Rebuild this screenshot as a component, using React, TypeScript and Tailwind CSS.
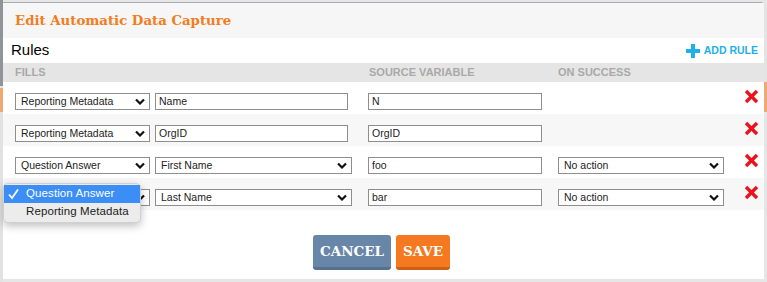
import React from 'react';

const sans = { fontFamily: '"Liberation Sans", Arial, sans-serif' };
const slab = { fontFamily: '"DejaVu Serif", serif' };

function Chevron() {
  return (
    <svg width="10" height="7" viewBox="0 0 10 7" className="shrink-0">
      <polyline points="1,1.5 5,5.5 9,1.5" fill="none" stroke="#111" strokeWidth="2.2" />
    </svg>
  );
}

function SelectBox({ value, width, hideText }: { value: string; width: string; hideText?: boolean }) {
  return (
    <div className={`${width} h-[17px] border border-[#8e8e8e] bg-white flex items-center justify-between pl-[5px] pr-[4px] text-[10.5px] text-[#222]`}>
      <span className={hideText ? 'invisible' : ''}>{value}</span>
      <Chevron />
    </div>
  );
}

function TextBox({ value, width }: { value: string; width: string }) {
  return (
    <div className={`${width} h-[17px] border border-[#8e8e8e] bg-white flex items-center pl-[3px] text-[10.5px] text-[#222]`}>
      {value}
    </div>
  );
}

function RemoveIcon() {
  return (
    <svg width="15" height="15" viewBox="0 0 15 15" className="-mt-[4px]">
      <line x1="2" y1="2" x2="13" y2="13" stroke="#e8131b" strokeWidth="3.4" />
      <line x1="13" y1="2" x2="2" y2="13" stroke="#e8131b" strokeWidth="3.4" />
    </svg>
  );
}

type Rule = {
  fill: string;
  target: string;
  targetIsSelect: boolean;
  source: string;
  success?: string;
};

const rules: Rule[] = [
  { fill: 'Reporting Metadata', target: 'Name', targetIsSelect: false, source: 'N' },
  { fill: 'Reporting Metadata', target: 'OrgID', targetIsSelect: false, source: 'OrgID' },
  { fill: 'Question Answer', target: 'First Name', targetIsSelect: true, source: 'foo', success: 'No action' },
  { fill: 'Question Answer', target: 'Last Name', targetIsSelect: true, source: 'bar', success: 'No action' },
];

// open native menu for the last rule's "fills" select
function FillMenu() {
  return (
    <div className="absolute left-0 top-[5px] w-[138px] h-[40px] rounded-[5px] bg-[#ececec] border border-[#d0d0d0] shadow-[0_3px_8px_rgba(0,0,0,0.25)] pt-[1px] text-[11.5px] text-[#222] z-10">
      <div className="h-[18px] bg-[#3b8ef5] text-white flex items-center">
        <svg width="22" height="12" viewBox="0 0 22 12" className="shrink-0">
          <polyline points="5,6.5 8,10 14,1.5" fill="none" stroke="#fff" strokeWidth="1.8" />
        </svg>
        <span className="tracking-[0.1px]">Question Answer</span>
      </div>
      <div className="h-[17px] flex items-center pl-[22px] tracking-[0.1px]">Reporting Metadata</div>
    </div>
  );
}

export default function App() {
  return (
    <div className="w-[767px] h-[282px] bg-[#e6e6e6] flex overflow-hidden" style={sans}>
      <div className="w-[3px] flex flex-col shrink-0">
        <div className="h-[86px] bg-[#8f939a]" />
        <div className="h-[2px] bg-[#e6e6e6]" />
        <div className="h-[24px] bg-[#eea873]" />
        <div className="flex-1 bg-[#e2e2e2]" />
      </div>

      <div className="w-[761px] mt-[2px] h-[277px] bg-white border-t border-[#a9abb0] rounded-tr-[3px] flex flex-col">
        <div className="h-[35px] bg-[#f6f6f6] flex items-center pl-[12px]">
          <h2 className="text-[13.3px] font-bold text-[#f47b20]" style={slab}>
            Edit Automatic Data Capture
          </h2>
        </div>

        <div className="h-[25px] flex items-center justify-between pl-[8px] pr-[6px]">
          <span className="text-[15px] text-black">Rules</span>
          <button className="flex items-center gap-[4px] text-[10.5px] font-bold text-[#1eb0e6]">
            <svg width="14" height="14" viewBox="0 0 14 14">
              <rect x="5" y="0" width="4" height="14" fill="#1eb0e6" />
              <rect x="0" y="5" width="14" height="4" fill="#1eb0e6" />
            </svg>
            ADD RULE
          </button>
        </div>

        <div className="h-[19px] bg-[#e5e5e5] flex items-center pl-[12px] text-[11px] font-bold text-[#a9a9a9]">
          <span className="w-[354px]">FILLS</span>
          <span className="w-[189px]">SOURCE VARIABLE</span>
          <span>ON SUCCESS</span>
        </div>

        {rules.map((r, i) => (
          <div
            key={i}
            className={`relative h-[32px] flex items-start pt-[11px] pl-[12px] ${i % 2 === 1 ? 'bg-[#f7f7f7]' : 'bg-white'}`}
          >
            <SelectBox value={r.fill} width="w-[135px]" hideText={i === 3} />
            <div className="w-[5px]" />
            {r.targetIsSelect ? (
              <SelectBox value={r.target} width="w-[197px]" />
            ) : (
              <TextBox value={r.target} width="w-[193px]" />
            )}
            <div className={r.targetIsSelect ? 'w-[16px]' : 'w-[20px]'} />
            <TextBox value={r.source} width="w-[174px]" />
            <div className="w-[16px]" />
            {r.success ? <SelectBox value={r.success} width="w-[166px]" /> : <div className="w-[166px]" />}
            <div className="w-[20px]" />
            <RemoveIcon />
            {i === 3 && <FillMenu />}
          </div>
        ))}

        <div className="flex-1 flex justify-center gap-[5px] pt-[25px] pr-[4px]">
          <button
            className="w-[78px] h-[35px] rounded-[3px] bg-[#6886a8] border-b-[3px] border-[#56718f] text-white text-[13.5px] font-bold"
            style={slab}
          >
            CANCEL
          </button>
          <button
            className="w-[54px] h-[35px] rounded-[3px] bg-[#f47920] border-b-[3px] border-[#cf5f12] text-white text-[13.5px] font-bold"
            style={slab}
          >
            SAVE
          </button>
        </div>
      </div>

      <div className="w-[3px] flex flex-col shrink-0">
        <div className="h-[2px] bg-[#e6e6e6]" />
        <div className="h-[80px] bg-[#e4e4e4]" />
        <div className="h-[30px] bg-[#eea873]" />
        <div className="flex-1 bg-[#e6e6e6]" />
      </div>
    </div>
  );
}
